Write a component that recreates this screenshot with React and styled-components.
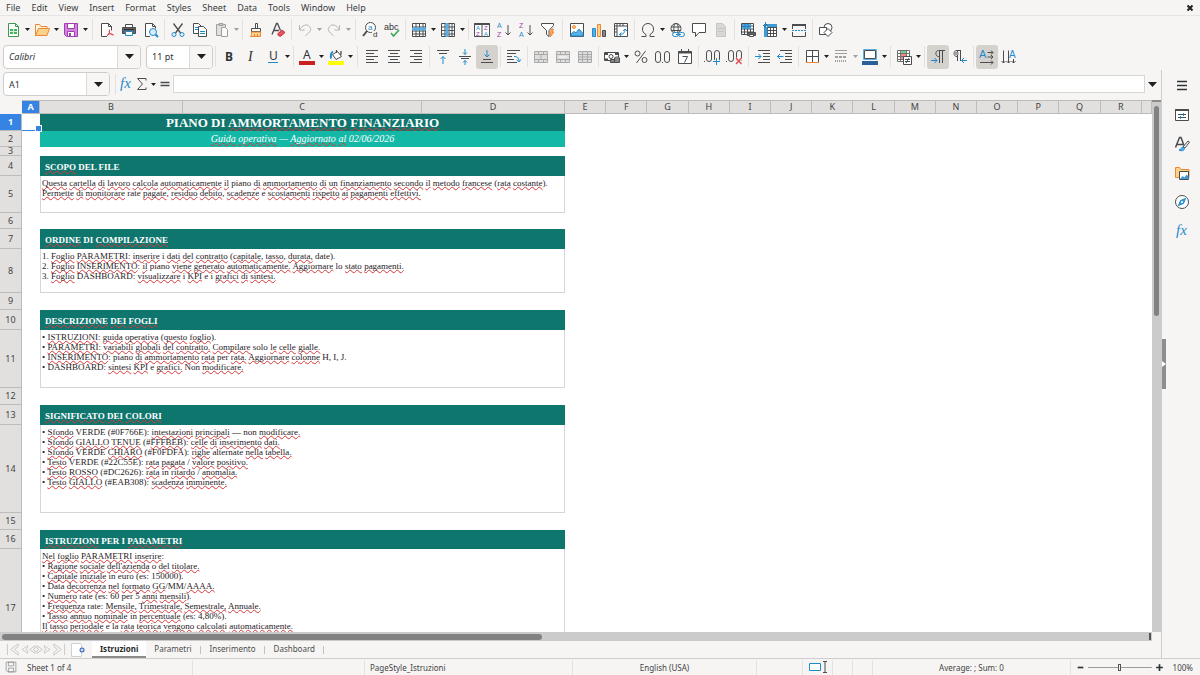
import { Fragment } from "react";
import styled, { createGlobalStyle, css } from "styled-components";

const GlobalStyle = createGlobalStyle`
  * {
    box-sizing: border-box;
  }

  body {
    margin: 0;
    background-color: #f6f5f4;
    color: #3b3d3e;
    font-family: "Noto Sans", "Open Sans", sans-serif;
    font-size: 9px;
  }

  button, input, select {
    margin: 0;
    padding: 0;
    border: 0;
    background: none;
    color: inherit;
    font: inherit;
  }
`;

const Window = styled.div`
  display: flex;
  flex-direction: column;
  height: 100vh;
  overflow: hidden;
`;

const MenuBar = styled.nav`
  display: flex;
  align-items: center;
  gap: 11px;
  height: 16px;
  padding: 0 6px;
  border-bottom: 1px solid #e6e5e3;
`;

const MenuItem = styled.button`
  line-height: 16px;
`;

const CloseButton = styled.button`
  display: flex;
  margin-left: auto;
`;

const Toolbar = styled.div`
  display: flex;
  align-items: center;
  height: 27px;
  padding: 0 2px;
`;

const ToolButton = styled.button`
  display: flex;
  align-items: center;
  justify-content: center;
  flex: none;
  width: ${({ $small }) => ($small ? "16px" : "22px")};
  height: 24px;
  border-radius: 3px;
  background-color: ${({ $active }) => ($active ? "#d5d1cd" : "transparent")};
  opacity: ${({ $faded }) => ($faded ? 0.5 : 1)};
`;

const CaretButton = styled.button`
  display: flex;
  align-items: center;
  justify-content: center;
  flex: none;
  width: 7px;
  height: 24px;
  opacity: ${({ $faded }) => ($faded ? 0.4 : 1)};
`;

const Separator = styled.span`
  flex: none;
  width: ${({ $wide }) => ($wide ? "7px" : "5px")};
  height: 21px;
  background: linear-gradient(#e2e1df, #e2e1df) center / 1px 100% no-repeat;
`;

const Combo = styled.label`
  display: flex;
  flex: none;
  position: relative;
  width: ${({ $width }) => $width};
  height: 24px;
  margin: 0 ${({ $gap }) => $gap || "3px"} 0 1px;
  border: 1px solid #cfccc9;
  border-radius: 4px;
  background-color: #fff;
  overflow: hidden;

  select, input {
    width: 100%;
    padding: 0 24px 0 5px;
    appearance: none;
    font-style: ${({ $italic }) => ($italic ? "italic" : "normal")};
    color: #2e3436;
  }
`;

const ComboArrow = styled.span`
  display: flex;
  align-items: center;
  justify-content: center;
  position: absolute;
  top: 0;
  right: 0;
  width: 23px;
  height: 100%;
  border-left: 1px solid #dcdad7;
  background-color: #f7f6f5;
  pointer-events: none;
`;

const Body = styled.div`
  display: flex;
  flex: 1;
  min-height: 0;
`;

const Workspace = styled.main`
  display: flex;
  flex: 1;
  flex-direction: column;
  min-width: 0;
`;

const FormulaBar = styled.div`
  display: flex;
  align-items: center;
  height: 30px;
  padding: 1px 2px 3px;
`;

const FormulaInput = styled.input`
  flex: 1;
  min-width: 0;
  height: 18px;
  padding: 0 4px;
  border: 1px solid #d8d6d3;
  background-color: #fff;
`;

const FormulaExpand = styled.button`
  display: flex;
  justify-content: center;
  width: 14px;
`;

const GridArea = styled.div`
  display: flex;
  flex: 1;
  min-height: 0;
`;

const SheetView = styled.div`
  flex: 1;
  min-width: 0;
  overflow: hidden;
  background-color: #fff;
`;

const Sheet = styled.table`
  width: 100%;
  table-layout: fixed;
  border-collapse: separate;
  border-spacing: 0;
  font-size: 9px;

  th, td {
    padding: 0;
  }
`;

const headerCell = css`
  background-color: ${({ $selected }) => ($selected ? "#3584e4" : "#e1e0de")};
  color: ${({ $selected }) => ($selected ? "#fff" : "#444")};
  font-weight: ${({ $selected }) => ($selected ? 700 : 400)};
  border-right: 1px solid #bebcba;
  border-bottom: 1px solid #bebcba;
`;

const Corner = styled.td`
  background-color: #f6f5f4;
`;

const ColumnHeader = styled.th`
  ${headerCell}
  height: 14px;
  border-top: 1px solid #bebcba;
  line-height: 12px;
`;

const RowHeader = styled.th`
  ${headerCell}
  height: ${({ $height }) => $height}px;
  line-height: 8px;
  vertical-align: middle;
`;

const ActiveCell = styled.td`
  position: relative;
  border-bottom: 1px solid #3584e4;

  &::after {
    content: "";
    position: absolute;
    right: -2px;
    bottom: -2px;
    z-index: 1;
    width: 5px;
    height: 5px;
    border: 1px solid #fff;
    background-color: #3584e4;
  }
`;

const cellStyles = {
  title: css`
    background-color: #0f766e;
    color: #fff;
    font-size: 13px;
    font-weight: 700;
    line-height: 16px;
    text-align: center;
    vertical-align: middle;
  `,
  subtitle: css`
    background-color: #14b8a6;
    color: #fff;
    font-size: 10px;
    font-style: italic;
    line-height: 14px;
    text-align: center;
    vertical-align: middle;
  `,
  heading: css`
    && {
      padding: 2px 5px 0;
    }
    background-color: #0f766e;
    color: #fff;
    font-size: 9px;
    font-weight: 700;
    line-height: 14px;
    vertical-align: middle;
  `,
  text: css`
    && {
      padding: 2px 1px 0;
    }
    border: solid #d4d6d9;
    border-width: 0 1px 1px;
    color: #1f2124;
    font-size: 9px;
    line-height: 10px;
    vertical-align: top;
  `,
};

const Cell = styled.td`
  font-family: "Liberation Serif", serif;
  white-space: nowrap;
  overflow: hidden;
  ${({ $kind }) => cellStyles[$kind]}
`;

const Line = styled.div``;

const Typo = styled.span`
  text-decoration: underline wavy #d8383b 1px;
  text-decoration-skip-ink: none;
  text-underline-offset: 0;
`;

const VerticalScroll = styled.div`
  flex: none;
  width: 9px;
  padding: 4px 2px 0;
  border-top: 2px solid #8d8c8b;
  background-color: #cbcbcb;
`;

const VerticalThumb = styled.div`
  height: 40%;
  border-radius: 3px;
  background-color: #828282;
`;

const HorizontalScroll = styled.div`
  display: flex;
  align-items: center;
  flex: none;
  height: 9px;
  margin-right: 9px;
  padding: 0 1px 0 2px;
  background-color: #cbcbcb;
`;

const HorizontalThumb = styled.div`
  width: 47%;
  height: 6px;
  border-radius: 3px;
  background-color: #828282;
`;

const SplitMark = styled.span`
  width: 2px;
  height: 7px;
  margin-left: auto;
  background-color: #555;
`;

const TabBar = styled.div`
  display: flex;
  align-items: center;
  flex: none;
  height: 17px;
  padding-left: 6px;
  font-size: 8px;
`;

const TabNav = styled.button`
  display: flex;
  width: 15px;
`;

const AddSheet = styled.button`
  display: flex;
  justify-content: center;
  width: 26px;
`;

const Tab = styled.button`
  height: 17px;
  padding: 0 8px;
  border-bottom: 2px solid ${({ $active }) => ($active ? "#8c8c8c" : "transparent")};
  background-color: ${({ $active }) => ($active ? "#fff" : "transparent")};
  font-weight: ${({ $active }) => ($active ? 700 : 400)};
  color: ${({ $active }) => ($active ? "#2b2b2b" : "#4d4d4d")};
  line-height: 14px;
`;

const TabDivider = styled.span`
  width: 1px;
  height: 8px;
  margin: 0 1px 0 0;
  background-color: #c4c2c0;
`;

const Sidebar = styled.aside`
  display: flex;
  flex-direction: column;
  align-items: center;
  flex: none;
  position: relative;
  width: 39px;
  padding: 1px 0 0 2px;
  border-left: 1px solid #cfcdcb;
`;

const SidebarButton = styled.button`
  display: flex;
  align-items: center;
  justify-content: center;
  width: 29px;
  height: 29px;
`;

const SidebarHandle = styled.button`
  display: flex;
  align-items: center;
  position: absolute;
  top: 269px;
  left: 0;
  width: 4px;
  height: 50px;
  background-color: #8e8e8e;
`;

const StatusBar = styled.footer`
  display: grid;
  grid-template-columns: 22px 171fr 172fr 208fr 184fr 46px 30px 20px 20px 198fr 129px;
  align-items: center;
  flex: none;
  height: 17px;
  border-top: 1px solid #cfcdcb;
  color: #444;
  font-size: 8px;
`;

const StatusCell = styled.div`
  display: flex;
  align-items: center;
  justify-content: ${({ $align }) => $align || "flex-start"};
  height: 15px;
  padding: 0 5px;
  border-right: 1px solid ${({ $plain }) => ($plain ? "transparent" : "#e4e3e1")};
  white-space: nowrap;
`;

const ZoomCell = styled.div`
  display: flex;
  align-items: center;
  gap: 3px;
  padding: 0 7px 0 5px;
`;

const ZoomButton = styled.button`
  display: flex;
`;

const ZoomSlider = styled.input`
  flex: 1;
  min-width: 0;
  height: 9px;
  appearance: none;
  background: linear-gradient(#9c9c9c, #9c9c9c) center / 100% 1px no-repeat;

  &::-webkit-slider-thumb {
    appearance: none;
    width: 3px;
    height: 7px;
    border: 1px solid #555;
    background-color: #f6f5f4;
  }
`;

const ZoomLevel = styled.output`
  margin-left: 6px;
`;

const Glyph = styled.svg`
  flex: none;
  overflow: visible;
`;

const ink = "#4a4c4e";
const blue = "#1e8bcd";
const orange = "#ed8733";
const purple = "#a03eb0";

const letter = (x, y, size, fill, text, extra) => (
  <text x={x} y={y} fontSize={size} fill={fill} stroke="none" fontFamily="Liberation Sans, sans-serif" {...extra}>
    {text}
  </text>
);

const mergeGrid = (inner) => (
  <>
    <path d="M1.500 2.500h13v11h-13zM1.500 5.500h13M1.500 10.500h13M5.500 2.500v3M10.500 2.500v3M5.500 10.500v3M10.500 10.500v3" fill="#dedede" stroke="#a9a9a9" />
    {inner}
  </>
);

const icons = {
  new: (
    <>
      <path d="M3.500 1.500h7l3 3v10h-10z" fill="#fff" stroke="#3a9a50" />
      <path d="M10.500 1.500v3h3" stroke="#3a9a50" />
      <path d="M5 7h7v5H5z" fill="#48b162" stroke="none" />
      <path d="M5 9.500h7M8.500 7v5" stroke="#d5f0da" />
    </>
  ),
  open: (
    <>
      <path d="M1.500 13.500v-11h4l1.500 2h6v3" fill="#fff4dc" stroke={orange} />
      <path d="M1.500 13.500 4.500 6.500h11l-2.500 7z" fill="#fbd28b" stroke={orange} />
    </>
  ),
  save: (
    <>
      <path d="M1.500 1.500h13v13h-11l-2-2z" fill="#cf87dc" stroke={purple} />
      <path d="M4.500 1.500h7v5h-7zM4.500 9.500h7v5h-7z" fill="#fff" stroke={purple} />
      <path d="M6 11h2v3H6z" fill={purple} stroke="none" />
    </>
  ),
  pdf: (
    <>
      <path d="M8 14.500H2.500v-13h7l3 3v4" fill="#fff" />
      <path d="M9.500 1.500v3h3" />
      <path d="M8 14c2-2 3-4 2.500-6.500M10 9c.5 2.500 2 3.500 4.500 4M8.500 12.500c2-1 4-1 6 .5" stroke="#d8434e" />
    </>
  ),
  print: (
    <>
      <path d="M4.500 5V2.500h7V5" fill="#fff" />
      <path d="M1.500 5.500h13v6h-13z" fill="#606365" />
      <path d="M4.500 9.500h7v4h-7z" fill="#fff" stroke={blue} />
      <path d="M3 7.500h10" stroke="#2c2e30" />
    </>
  ),
  preview: (
    <>
      <path d="M7 14.500H2.500v-13h7l3 3v2" fill="#fff" />
      <path d="M9.500 1.500v3h3" />
      <circle cx="10" cy="10" r="3.500" fill="#d7ecfa" stroke={blue} />
      <path d="m12.500 12.500 2.500 2.500" stroke={blue} strokeWidth="2" />
    </>
  ),
  cut: (
    <>
      <path d="m3.500 1.500 7 9.500M12.500 1.500 5.500 11" strokeWidth="1.300" />
      <circle cx="4" cy="12.500" r="2" stroke={blue} />
      <circle cx="12" cy="12.500" r="2" stroke={blue} />
    </>
  ),
  copy: (
    <>
      <path d="M1.500 1.500h5l3 3v7h-8z" fill="#fff" />
      <path d="M3 5.500h3M3 7.500h3" stroke={blue} />
      <path d="M6.500 4.500h5l3 3v7h-8z" fill="#fff" />
      <path d="M8 9.500h5M8 11.500h5" stroke={blue} />
    </>
  ),
  paste: (
    <>
      <path d="M2.500 2.500h9v11h-9z" fill="#ccc" />
      <path d="M5 1.500h4v2H5z" fill="#999" />
      <path d="M7.500 5.500h4l2 2v7h-6z" fill="#fff" />
    </>
  ),
  brush: (
    <>
      <path d="M7.500 1.500h2v5h-2z" fill="#fff" />
      <path d="M3.500 6.500h9v3h-9z" fill="#fff" />
      <path d="M3.500 10h9v4.500h-10c1-1 1-2.500 1-4.500z" fill="#fbd28b" stroke={orange} />
      <path d="M6.500 12v2M9.500 12v2" stroke={orange} />
    </>
  ),
  clear: (
    <>
      <path d="M2 12.500 6.500 1.500h1l3 7M4 8.500h5" strokeWidth="1.300" />
      <path d="m8 11.500 4-3.500 3 2.500-4 3.500c-1.500 1-4-1-3-2.500z" fill="#e2545f" stroke="#c8323f" />
    </>
  ),
  undo: <path d="M2.500 3v5h5M2.500 8C5 3 10 1.500 12.500 4.500s1 5.500-4 9" stroke="#777" />,
  redo: <path d="M13.500 3v5h-5M13.500 8C11 3 6 1.500 3.500 4.500s-1 5.500 4 9" stroke="#777" />,
  find: (
    <>
      <circle cx="8.500" cy="5.500" r="5" fill="#fff" />
      <path d="m5 9-4 5" strokeWidth="2" />
      {letter(6, 8, 8, blue, "a")}
      <path d="M10 9h6v7h-6z" fill="#f6f5f4" stroke="none" />
      {letter(11, 15, 8, "#333", "d")}
    </>
  ),
  spell: (
    <>
      {letter(0, 8, 9, "#333", "abc")}
      <path d="m7 11 2.500 3L15 8" stroke="#34a853" strokeWidth="1.500" />
    </>
  ),
  rows: (
    <>
      <path d="M1.500 1.500h13v13h-13z" fill="#fff" />
      <path d="M1.500 5h13M1.500 9h13M1.500 12h13M5 1.500v13M8.500 1.500v13M12 1.500v13" />
      <path d="M1 5.500h14v3H1z" fill="#5cb0e6" stroke="none" />
    </>
  ),
  columns: (
    <>
      <path d="M1.500 1.500h13v13h-13z" fill="#fff" />
      <path d="M1.500 5h13M1.500 8.500h13M1.500 12h13M5 1.500v13M9 1.500v13M12 1.500v13" />
      <path d="M5.500 1h3v14h-3z" fill="#5cb0e6" stroke="none" />
    </>
  ),
  sort: (
    <>
      <path d="M.5 1.500h15v13H.5zM8 2v12" fill="#fff" />
      <path d="M.5 2h15" strokeWidth="2" />
      {letter(2, 8, 6, blue, "A")}
      {letter(2, 14, 6, purple, "Z")}
      {letter(10, 8, 6, purple, "Z")}
      {letter(10, 14, 6, blue, "A")}
    </>
  ),
  sortAsc: (
    <>
      {letter(1, 6, 7, blue, "A")}
      {letter(1, 15, 7, purple, "Z")}
      <path d="M12 3v10M9.500 10.500 12 13l2.500-2.500" />
    </>
  ),
  sortDesc: (
    <>
      {letter(1, 6, 7, purple, "Z")}
      {letter(1, 15, 7, blue, "A")}
      <path d="M12 3v10M9.500 10.500 12 13l2.500-2.500" />
    </>
  ),
  filter: (
    <>
      <path d="M1.500 1.500h12v2l-4.500 5v6l-2.500-2v-4l-5-5z" fill="#fff" />
      <path d="m12 7-3 4h2l-1 4 4-5h-2l1.500-3z" fill="#fbb45e" stroke={orange} />
    </>
  ),
  image: (
    <>
      <path d="M1.500 1.500h13v13h-13z" fill="#fff" />
      <circle cx="5" cy="5" r="1.500" stroke={orange} fill="#fbd28b" />
      <path d="m2 14 0-2 3-2.500 2 1.500 3-4 4 4.500V14z" fill="#5cb0e6" stroke={blue} />
    </>
  ),
  chart: (
    <>
      <path d="M1.500 6.500h3v8h-3z" fill="#5cb0e6" stroke={blue} />
      <path d="M6.500 2.500h3v12h-3z" fill="#fbd28b" stroke={orange} />
      <path d="M11.500 8.500h3v6h-3z" fill="#888" />
    </>
  ),
  pivot: (
    <>
      <path d="M1.500 1.500h13v13h-13z" fill="#fff" />
      <path d="M1.500 4h13M4 1.500v13M7 2v2M10 2v2M2 7h2M2 10h2" />
      <path d="M6.500 12.500c4 0 5.500-2 5.500-5.500M10 9l2-2 2 2M8.500 10.500l-2 2 2 2" stroke={blue} />
    </>
  ),
  omega: <path d="M1.500 14.500H6v-2C3 11 2.500 9 2.500 7c0-3.500 2.500-5.500 5.500-5.500s5.500 2 5.500 5.500c0 2-.5 4-3.500 5.500v2h4.500" />,
  link: (
    <>
      <circle cx="7" cy="6.500" r="5" />
      <ellipse cx="7" cy="6.500" rx="2.200" ry="5" />
      <path d="M2 5h10M2 8.500h10" />
      <rect x="3.500" y="10.500" width="6" height="4" rx="2" fill="#f6f5f4" stroke={blue} />
      <rect x="9.500" y="10.500" width="6" height="4" rx="2" fill="#f6f5f4" stroke={blue} />
      <path d="M7 12.500h5" stroke={blue} />
    </>
  ),
  comment: <path d="M1.500 1.500h13v9H8l-3.500 4v-4h-3z" fill="#fff" />,
  header: (
    <>
      <path d="M3.500 1.500h6l3 3v10h-9z" fill="#bbb" stroke="#999" />
      <path d="M5 6.500h6M5 9.500h6" stroke="#999" />
    </>
  ),
  printArea: (
    <>
      <path d="M1.500 1.500h12v11h-12z" fill="#fff" />
      <path d="M1.500 4h12M1.500 7h12M1.500 10h12M4.500 1.500v11M7.500 1.500v11M10.500 1.500v11" />
      <path d="M2 2h9v5H2z" fill="#4ea5dd" stroke="none" />
      <path d="M2 4.500h9M5 2v5M8 2v5" stroke="#2f7fb8" />
      <path d="M7.500 10.500h8v3h-8z" fill="#606365" />
      <path d="M9.500 12.500h4v2h-4z" fill="#fff" />
    </>
  ),
  freeze: (
    <>
      <path d="M2.500 2.500h12v12h-12z" fill="#fff" />
      <path d="M5.500 2.500v12M2.500 5.500h12M2.500 8.500h12M2.500 11.500h12M8.500 2.500v12M11.500 2.500v12" />
      <path d="M2 5h3.500v10H2zM5 2h10v3H5z" fill="#3f9bd8" stroke="none" />
      <path d="M3.500 0v6M1 3.500h5" stroke={blue} />
    </>
  ),
  split: (
    <>
      <path d="M1.500 2.500h13M1.500 2v5M14.500 2v5M1.500 10v4.500h13V10" />
      <path d="M2 3h12" strokeWidth="2" />
      <path d="M1 8.500h14" stroke={blue} strokeDasharray="2 1" />
    </>
  ),
  shapes: (
    <>
      <circle cx="10" cy="5.500" r="4" fill="#fff" />
      <path d="M1.500 5.500h7v7h-7z" fill="#fff" />
      <path d="m10 6.500 4 4-4 4-4-4z" fill="#fff" />
    </>
  ),
  bold: letter(4, 12, 12, "#2e3436", "B", { fontWeight: 700, fontFamily: "Noto Sans, sans-serif" }),
  italic: letter(5, 12, 14, "#2e3436", "I", { fontStyle: "italic", fontFamily: "Liberation Serif, serif" }),
  underline: (
    <>
      {letter(4, 11, 12, "#2e3436", "U", { fontFamily: "Noto Sans, sans-serif" })}
      <path d="M3 13.500h10" stroke={blue} />
    </>
  ),
  fontColor: (
    <>
      {letter(4, 10, 12, "#2e3436", "A", { fontFamily: "Noto Sans, sans-serif" })}
      <path d="M0 14h16" stroke="#c9211e" strokeWidth="4" />
    </>
  ),
  fill: (
    <>
      <path d="m4.500 5.500 5-3 4 5-5.500 3z" fill="#fff" />
      <path d="M8.500 4V1M13 2v4" strokeWidth="1.300" />
      <path d="M5 2.500C2.500 4 2.500 6 3 9.500" stroke={blue} strokeWidth="2" />
      <path d="M0 14h16" stroke="#ffff00" strokeWidth="4" />
    </>
  ),
  left: <path d="M2 1.500h12M2 4.500h8M2 7.500h12M2 10.500h8M2 13.500h12" />,
  center: <path d="M2 1.500h12M4 4.500h8M2 7.500h12M4 10.500h8M2 13.500h12" />,
  right: <path d="M2 1.500h12M6 4.500h8M2 7.500h12M6 10.500h8M2 13.500h12" />,
  top: (
    <>
      <path d="M2 1.500h12M4 4.500h8" />
      <path d="M8 15V7.500M5.500 10 8 7.500l2.500 2.500" stroke={blue} />
    </>
  ),
  middle: (
    <>
      <path d="M2 7.500h12M4 9.500h8" />
      <path d="M8 0v5.500M6 3.500l2 2 2-2M8 16v-4.500M6 13.500l2-2 2 2" stroke={blue} />
    </>
  ),
  bottom: (
    <>
      <path d="M4 10.500h8M2 13.500h12" />
      <path d="M8 1v7M5.500 5.500 8 8l2.500-2.500" stroke={blue} />
    </>
  ),
  wrap: (
    <>
      <path d="M1 1.500h13M1 4.500h9M1 7.500h5M1 10.500h7M1 13.500h10" />
      <path d="M8 7.500c3 0 5 1 5 5M10.500 10.500l2.500 2.500 2-2.500" stroke={blue} />
    </>
  ),
  merge: mergeGrid(<path d="M8 6v4" stroke="#a9a9a9" />),
  mergeCenter: mergeGrid(<path d="M4 8h8" stroke="#fff" />),
  unmerge: mergeGrid(<path d="M1.500 8h13M5.500 6v4M10.500 6v4" stroke="#a9a9a9" />),
  currency: (
    <>
      <path d="M.5 3.500h14v8H.5z" fill="#fff" />
      <circle cx="7" cy="7.500" r="2" />
      <path d="M1 4h3v2H1zM11 4h3v2h-3zM1 9.500h3v2H1z" fill={ink} stroke="none" />
      <ellipse cx="13" cy="9" rx="2.500" ry="1" fill="#ddd" />
      <path d="M10.500 9v4.500h5V9M6.500 10.500v3h4v-3z" fill="#888" />
    </>
  ),
  percent: (
    <>
      <circle cx="4.500" cy="4.500" r="2.500" />
      <circle cx="11.500" cy="11" r="2.500" />
      <path d="m12.500 2-9 12" />
    </>
  ),
  number: (
    <>
      <rect x=".5" y="2.500" width="5" height="11" rx="2.500" />
      <rect x="9.500" y="2.500" width="5" height="11" rx="2.500" />
      <path d="M7 13.500h1" />
    </>
  ),
  date: (
    <>
      <path d="M1.500 2.500h13v12h-13z" fill="#fff" />
      <path d="M1 3.500h14" strokeWidth="2" />
      <path d="M4.500 0v3M11.500 0v3" />
      <path d="M5.500 7.500h5l-3 6" />
    </>
  ),
  addDecimal: (
    <>
      <rect x="2.500" y="1.500" width="5" height="11" rx="2.500" />
      <rect x="10.500" y="1.500" width="5" height="11" rx="2.500" />
      <path d="M0 12.500h1" />
      <path d="M12.500 9v6M9.500 12.500h6" stroke="#f6f5f4" strokeWidth="3" />
      <path d="M12.500 9v7M9 12.500h7" stroke={blue} />
    </>
  ),
  removeDecimal: (
    <>
      <rect x="2.500" y="1.500" width="5" height="11" rx="2.500" />
      <rect x="10.500" y="1.500" width="5" height="11" rx="2.500" />
      <path d="M0 12.500h1" />
      <path d="m10 9 5.500 6M15.500 9 10 15" stroke="#f6f5f4" strokeWidth="3" />
      <path d="m10 9 5.500 6M15.500 9 10 15" stroke="#e0444f" strokeWidth="1.300" />
    </>
  ),
  indent: (
    <>
      <path d="M3 1.500h12M8 4.500h7M8 7.500h7M8 10.500h7M3 13.500h12" />
      <path d="M0 7.500h6M3.500 5 6 7.500 3.500 10" stroke={blue} />
    </>
  ),
  outdent: (
    <>
      <path d="M3 1.500h12M8 4.500h7M8 7.500h7M8 10.500h7M3 13.500h12" />
      <path d="M6.500 7.500H.5M3 5 .5 7.500 3 10" stroke={blue} />
    </>
  ),
  borders: (
    <>
      <path d="M2.500 13.500v-12h12v12M8.500 1.500v12M2.500 7.500h12" fill="#fff" />
      <path d="M2 13.500h13" stroke={orange} />
    </>
  ),
  lineStyle: (
    <>
      <path d="M2 1.500h12M2 4.500h12" />
      <path d="M2 8h12" strokeDasharray="3 1" strokeWidth="2" />
      <path d="M2 12h12" strokeDasharray="1 1" strokeWidth="2" />
    </>
  ),
  borderColor: (
    <>
      <path d="M2.500 1.500h11v8h-11z" fill="#fff" stroke={ink} />
      <path d="M1.500.5h13v10h-13z" stroke="#5cb0e6" />
      <path d="M0 14h16" stroke="#2a6099" strokeWidth="4" />
    </>
  ),
  conditional: (
    <>
      <path d="M1 1h13v12H1z" fill="#fff" stroke="none" />
      <path d="M4 1h7v3H4z" fill="#7bd086" stroke="none" />
      <path d="M4 4.500h7v6H4z" fill="#f58a84" stroke="none" />
      <path d="M1.500 1.500h12v11h-12zM1.500 4.500h12M1.500 7.500h12M1.500 10.500h12M4.500 1.500v11M10.500 1.500v11" stroke="#6d6f70" />
      <path d="M7.500 7.500h8v8h-8z" fill="#fff" />
      <path d="M9 10.500h5M9 12.500h5M13 9l-3 5" />
    </>
  ),
  ltr: (
    <>
      <path d="M15 1.500H8.500C5 1.500 5 7.500 8.500 7.500H9M9.500 1.500V14M12.500 1.500V14" />
      <path d="M1 11.500h6M4.500 9 7 11.500 4.500 14" stroke={blue} />
    </>
  ),
  rtl: (
    <>
      <path d="M9 1.500H5c-4 0-4 6 0 6h.5M5.500 1.500V12M8.500 1.500V12" />
      <path d="M2.500 3h4v3h-3z" fill="#999" stroke="none" />
      <path d="M15 11.500H9.500M12 9l-2.500 2.500L12 14" stroke={blue} />
    </>
  ),
  textHorizontal: (
    <>
      {letter(0, 9, 11, blue, "A")}
      <path d="M8.500 3.500H14M12 1.500l2 2-2 2M8.500 8H14M12 6l2 2-2 2M1 13.500h13M12 11.500l2 2-2 2" />
    </>
  ),
  textVertical: (
    <>
      {letter(8, 9, 10, blue, "A")}
      <path d="M2.500 1.500V14M.5 12l2 2 2-2M7.500 1.500V14M5.500 12l2 2 2-2M12.500 10v4M10.500 12l2 2 2-2" />
    </>
  ),
  fx: letter(2, 12, 15, blue, "fx", { fontStyle: "italic", fontFamily: "Liberation Serif, serif" }),
  sum: <path d="M12 4.500v-2H3.500l5 5.500-5 5.500H12v-2" />,
  equals: <path d="M3.500 6.500h9M3.500 9.500h9" strokeWidth="1.500" />,
  menu: <path d="M3 3.500h10M3 7.500h10M3 11.500h10" stroke="#2e3436" strokeWidth="1.500" />,
  properties: (
    <>
      <path d="M1.500 2.500h13v11h-13z" fill="#fff" />
      <path d="M1 3h14" strokeWidth="2" />
      <path d="M4 7.500h8M4 10.500h8" />
      <path d="M9.500 6v3M6.500 9v3" stroke={blue} />
    </>
  ),
  styles: (
    <>
      <path d="M1.500 11.500 5.500 1.500h1.500l3 8M3 8.500h6" strokeWidth="1.500" />
      <path d="m9 11 5-6 1.500 1L11 12z" fill="#fff" />
      <path d="M5 14c2 0 2-3 4-3l1.500 1.500c0 2-3 3-5.500 1.500z" fill="#5cb0e6" stroke={blue} />
    </>
  ),
  gallery: (
    <>
      <path d="M1.500 12.500v-10h4l1.500 2h8v8z" fill="#fbd28b" stroke={orange} />
      <path d="M5.500 6.500h9v8h-9z" fill="#fff" />
      <path d="m6 14 2.500-3 2 1.500 2-3 2 2V14z" fill="#3f9bd8" stroke="none" />
    </>
  ),
  navigator: (
    <>
      <circle cx="8" cy="8" r="6.500" fill="#fff" />
      <path d="m11.500 4.500-2 5-5 2 2-5z" fill="#3f9bd8" stroke={blue} />
      <circle cx="8" cy="8" r="1" fill="#fff" stroke="none" />
    </>
  ),
  floppy: (
    <path d="M1.500 1.500h13v13h-11l-2-2zM4.500 1.500h7v5h-7zM4.500 9.500h7v5h-7z" stroke="#8a8c8e" />
  ),
  sheetAdd: (
    <>
      <path d="M.5 1.500h9l1 1v12H.5z" fill="#fff" stroke="#cfcfcf" />
      <circle cx="11" cy="8" r="2.500" fill="#3465c0" stroke="none" />
      <path d="M9.500 8h3M11 6.500v3" stroke="#fff" />
    </>
  ),
  first: <path d="M1.500 2v12M13 2 5 8l8 6v-3L9 8l4-3z" stroke="#c6c6c6" />,
  previous: <path d="M7 4 1 8l6 4V9.500L5 8l2-1.500zM15 4 9 8l6 4V9.500L13 8l2-1.500z" stroke="#c6c6c6" />,
  next: <path d="m1 4 6 4-6 4V9.500L3 8 1 6.500zM9 4l6 4-6 4V9.500L11 8 9 6.500z" stroke="#c6c6c6" />,
  last: <path d="M14.500 2v12M3 2l8 6-8 6v-3l4-3-4-3z" stroke="#c6c6c6" />,
  minus: <path d="M3 8h10" stroke="#2e3436" strokeWidth="3" />,
  plus: <path d="M2 8h12M8 2v12" stroke="#2e3436" strokeWidth="3" />,
  close: <path d="m3 3 10 10M13 3 3 13" stroke="#1e2022" strokeWidth="4" />,
};

const Icon = ({ name, size = 16 }) => (
  <Glyph width={size} height={size} viewBox="0 0 16 16" fill="none" stroke={ink} aria-hidden="true">
    {icons[name]}
  </Glyph>
);

const Caret = ({ wide }) => (
  <svg width={wide ? 9 : 5} height={wide ? 5 : 3} viewBox="0 0 10 6" preserveAspectRatio="none" aria-hidden="true">
    <path d="M0 0h10L5 6z" fill="#1e2022" />
  </svg>
);

const menus = ["File", "Edit", "View", "Insert", "Format", "Styles", "Sheet", "Data", "Tools", "Window", "Help"];

// "|" is a separator, "||" a wide one; "+" adds a drop-down, "!" presses a button, "-" greys it out
const standardTools = [
  "new+", "open+", "save+", "||", "pdf", "print", "preview", "|", "cut", "copy", "paste+-", "|",
  "brush", "clear", "|", "undo+-", "redo+-", "||", "find", "spell", "|", "rows+", "columns+", "|",
  "sort", "sortAsc", "sortDesc", "filter", "||", "image", "chart", "pivot", "|",
  "omega+", "link", "comment", "header-", "|", "printArea", "freeze+", "split", "|", "shapes",
];

const formatTools = [
  "bold", "italic", "underline+", "|", "fontColor+", "fill+", "||", "left", "center", "right", "|",
  "top", "middle", "bottom!", "|", "wrap", "|", "merge", "mergeCenter", "unmerge", "|",
  "currency+", "percent", "number", "date", "|", "addDecimal", "removeDecimal", "||", "indent", "outdent", "|",
  "borders+", "lineStyle+-", "borderColor+", "|", "conditional+", "|", "ltr!", "rtl", "|",
  "textHorizontal!", "textVertical",
];

const Tools = ({ items }) =>
  items.map((item, index) => {
    if (item.startsWith("|")) {
      return <Separator key={index} $wide={item === "||"} />;
    }
    const name = item.replace(/[^a-z]/gi, "");
    const faded = item.includes("-");
    return (
      <Fragment key={index}>
        <ToolButton aria-label={name} $active={item.includes("!")} $faded={faded}>
          <Icon name={name} />
        </ToolButton>
        {item.includes("+") && (
          <CaretButton aria-label={`${name} options`} $faded={faded}>
            <Caret />
          </CaretButton>
        )}
      </Fragment>
    );
  });

const columns = "ABCDEFGHIJKLMNOPQR".split("");
const wideColumns = [22, 18, 143, 239, 143];

// words between tildes are flagged by the spell checker
const rows = [
  { height: 17, kind: "title", lines: ["PIANO DI ~AMMORTAMENTO~ ~FINANZIARIO~"] },
  { height: 16, kind: "subtitle", lines: ["~Guida~ ~operativa~ — ~Aggiornato~ ~al~ 02/06/2026"] },
  { height: 9 },
  { height: 20, kind: "heading", lines: ["~SCOPO~ DEL FILE"] },
  {
    height: 37,
    kind: "text",
    lines: [
      "~Questa~ ~cartella~ ~di~ ~lavoro~ ~calcola~ ~automaticamente~ ~il~ piano ~di~ ~ammortamento~ ~di~ ~un~ ~finanziamento~ ~secondo~ ~il~ ~metodo~ ~francese~ (~rata~ ~costante~).",
      "~Permette~ ~di~ ~monitorare~ rate ~pagate~, ~residuo~ ~debito~, ~scadenze~ e ~scostamenti~ ~rispetto~ ~ai~ ~pagamenti~ ~effettivi.~",
    ],
  },
  { height: 16 },
  { height: 20, kind: "heading", lines: ["~ORDINE~ DI ~COMPILAZIONE~"] },
  {
    height: 44,
    kind: "text",
    lines: [
      "1. ~Foglio~ ~PARAMETRI~: ~inserire~ i ~dati~ ~del~ ~contratto~ (~capitale~, ~tasso~, ~durata,~ date).",
      "2. ~Foglio~ ~INSERIMENTO~: ~il~ piano ~viene~ ~generato~ ~automaticamente.~ ~Aggiornare~ lo ~stato~ ~pagamenti.~",
      "3. ~Foglio~ DASHBOARD: ~visualizzare~ i ~KPI~ e i ~grafici~ ~di~ ~sintesi.~",
    ],
  },
  { height: 17 },
  { height: 20, kind: "heading", lines: ["~DESCRIZIONE~ ~DEI~ ~FOGLI~"] },
  {
    height: 58,
    kind: "text",
    lines: [
      "• ~ISTRUZIONI~: ~guida~ ~operativa~ (~questo~ ~foglio~).",
      "• ~PARAMETRI~: ~variabili~ ~globali~ ~del~ ~contratto.~ ~Compilare~ solo ~le~ ~celle~ ~gialle.~",
      "• ~INSERIMENTO~: piano ~di~ ~ammortamento~ ~rata~ per ~rata.~ ~Aggiornare~ ~colonne~ H, I, J.",
      "• DASHBOARD: ~sintesi~ ~KPI~ e ~grafici.~ Non ~modificare.~",
    ],
  },
  { height: 17 },
  { height: 20, kind: "heading", lines: ["~SIGNIFICATO~ ~DEI~ ~COLORI~"] },
  {
    height: 88,
    kind: "text",
    lines: [
      "• ~Sfondo~ VERDE (#0F766E): ~intestazioni~ ~principali~ — non ~modificare.~",
      "• ~Sfondo~ ~GIALLO~ ~TENUE~ (#~FFFBEB~): ~celle~ ~di~ ~inserimento~ ~dati.~",
      "• ~Sfondo~ VERDE ~CHIARO~ (#F0FDFA): ~righe~ alternate ~nella~ ~tabella.~",
      "• ~Testo~ VERDE (#22C55E): ~rata~ ~pagata~ / ~valore~ ~positivo.~",
      "• ~Testo~ ~ROSSO~ (#DC2626): ~rata~ in ~ritardo~ / ~anomalia.~",
      "• ~Testo~ ~GIALLO~ (#EAB308): ~scadenza~ ~imminente.~",
    ],
  },
  { height: 17 },
  { height: 19, kind: "heading", lines: ["~ISTRUZIONI~ PER I ~PARAMETRI~"] },
  {
    height: 118,
    kind: "text",
    lines: [
      "~Nel~ ~foglio~ ~PARAMETRI~ ~inserire~:",
      "• ~Ragione~ ~sociale~ ~dell'azienda~ o ~del~ ~titolare.~",
      "• ~Capitale~ ~iniziale~ in euro (es: 150000).",
      "• Data ~decorrenza~ ~nel~ ~formato~ ~GG~/MM/~AAAA.~",
      "• ~Numero~ rate (es: 60 per 5 ~anni~ ~mensili~).",
      "• ~Frequenza~ rate: ~Mensile,~ ~Trimestrale,~ ~Semestrale,~ ~Annuale.~",
      "• ~Tasso~ ~annuo~ ~nominale~ in ~percentuale~ (es: 4,80%).",
      "~Il~ ~tasso~ ~periodale~ e la ~rata~ ~teorica~ ~vengono~ ~calcolati~ ~automaticamente.~",
    ],
  },
];

const CheckedText = ({ text }) =>
  text.split("~").map((part, index) => (index % 2 ? <Typo key={index}>{part}</Typo> : part));

const Spreadsheet = () => (
  <Sheet>
    <colgroup>
      {wideColumns.map((width, index) => (
        <col key={index} width={width} />
      ))}
      {columns.slice(4).map((name) => (
        <col key={name} />
      ))}
      <col width="10" />
    </colgroup>
    <thead>
      <tr>
        <Corner />
        {columns.map((name) => (
          <ColumnHeader key={name} scope="col" $selected={name === "A"}>
            {name}
          </ColumnHeader>
        ))}
        <ColumnHeader aria-label="S" />
      </tr>
    </thead>
    <tbody>
      {rows.map(({ height, kind, lines = [] }, index) => (
        <tr key={index}>
          <RowHeader scope="row" $height={height} $selected={index === 0}>
            {index + 1}
          </RowHeader>
          {index === 0 ? <ActiveCell /> : <td />}
          <Cell colSpan={3} $kind={kind}>
            {lines.map((line) => (
              <Line key={line}>
                <CheckedText text={line} />
              </Line>
            ))}
          </Cell>
          <td colSpan={15} />
        </tr>
      ))}
    </tbody>
  </Sheet>
);

const tabs = ["Istruzioni", "Parametri", "Inserimento", "Dashboard"];

const App = () => {
  return (
    <Window>
      <GlobalStyle />
      <MenuBar>
        {menus.map((menu) => (
          <MenuItem key={menu}>{menu}</MenuItem>
        ))}
        <CloseButton aria-label="Close document">
          <Icon name="close" size={8} />
        </CloseButton>
      </MenuBar>
      <Toolbar>
        <Tools items={standardTools} />
      </Toolbar>
      <Toolbar>
        <Combo $width="138px" $gap="4px" $italic>
          <select aria-label="Font name" defaultValue="Calibri">
            <option>Calibri</option>
          </select>
          <ComboArrow>
            <Caret wide />
          </ComboArrow>
        </Combo>
        <Combo $width="67px" $gap="0">
          <select aria-label="Font size" defaultValue="11 pt">
            <option>11 pt</option>
          </select>
          <ComboArrow>
            <Caret wide />
          </ComboArrow>
        </Combo>
        <Separator />
        <Tools items={formatTools} />
      </Toolbar>
      <Body>
        <Workspace>
          <FormulaBar>
            <Combo $width="107px">
              <input aria-label="Name box" defaultValue="A1" />
              <ComboArrow>
                <Caret wide />
              </ComboArrow>
            </Combo>
            <Separator />
            <ToolButton $small aria-label="Function wizard">
              <Icon name="fx" />
            </ToolButton>
            <ToolButton $small aria-label="Select function">
              <Icon name="sum" />
            </ToolButton>
            <CaretButton aria-label="Function list">
              <Caret />
            </CaretButton>
            <ToolButton $small aria-label="Formula">
              <Icon name="equals" />
            </ToolButton>
            <FormulaInput aria-label="Input line" />
            <FormulaExpand aria-label="Expand formula bar">
              <Caret wide />
            </FormulaExpand>
          </FormulaBar>
          <GridArea>
            <SheetView>
              <Spreadsheet />
            </SheetView>
            <VerticalScroll>
              <VerticalThumb />
            </VerticalScroll>
          </GridArea>
          <HorizontalScroll>
            <HorizontalThumb />
            <SplitMark />
          </HorizontalScroll>
          <TabBar>
            {["first", "previous", "next", "last"].map((name) => (
              <TabNav key={name} aria-label={`${name} sheet`}>
                <Icon name={name} size={15} />
              </TabNav>
            ))}
            <AddSheet aria-label="Add sheet">
              <Icon name="sheetAdd" />
            </AddSheet>
            {tabs.map((tab, index) => (
              <Fragment key={tab}>
                <Tab $active={index === 0}>{tab}</Tab>
                {index > 0 && <TabDivider />}
              </Fragment>
            ))}
          </TabBar>
        </Workspace>
        <Sidebar>
          {["menu", "properties", "styles", "gallery", "navigator", "fx"].map((name) => (
            <SidebarButton key={name} aria-label={name}>
              <Icon name={name} />
            </SidebarButton>
          ))}
          <SidebarHandle aria-label="Hide sidebar">
            <svg width="4" height="6" viewBox="0 0 4 6" aria-hidden="true">
              <path d="M0 0l4 3-4 3z" fill="#fff" />
            </svg>
          </SidebarHandle>
        </Sidebar>
      </Body>
      <StatusBar>
        <StatusCell $plain>
          <Icon name="floppy" size={12} />
        </StatusCell>
        <StatusCell>Sheet 1 of 4</StatusCell>
        <StatusCell />
        <StatusCell>PageStyle_Istruzioni</StatusCell>
        <StatusCell $align="center">English (USA)</StatusCell>
        <StatusCell />
        <StatusCell>
          <Glyph width="20" height="12" viewBox="0 0 20 12" fill="none" aria-hidden="true">
            <path d="M1.500 2.500h11v7h-11z" stroke={blue} fill="#fff" />
            <path d="M15 .5h4M15 11.500h4M17 1v10" stroke={ink} />
          </Glyph>
        </StatusCell>
        <StatusCell />
        <StatusCell />
        <StatusCell $align="center">Average: ; Sum: 0</StatusCell>
        <ZoomCell>
          <ZoomButton aria-label="Zoom out">
            <Icon name="minus" size={9} />
          </ZoomButton>
          <ZoomSlider type="range" aria-label="Zoom" defaultValue={50} />
          <ZoomButton aria-label="Zoom in">
            <Icon name="plus" size={9} />
          </ZoomButton>
          <ZoomLevel>100%</ZoomLevel>
        </ZoomCell>
      </StatusBar>
    </Window>
  );
};

export default App;
